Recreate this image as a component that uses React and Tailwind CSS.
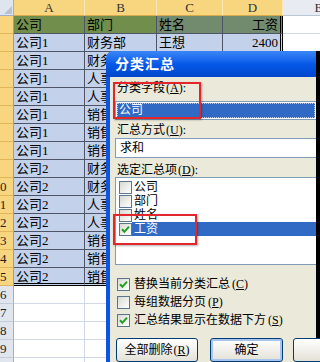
import React from "react";

const colA = ["公司", ...Array(7).fill("公司1"), ...Array(7).fill("公司2")];
const colB = [
  "部门", "财务部", "财务部", "人事部", "人事部", "销售部", "销售部", "销售部",
  "财务部", "财务部", "人事部", "人事部", "销售部", "销售部", "销售部",
];
const LETTERS = ["A", "B", "C", "D", "E"];
const ROWS = Array.from({ length: 20 }, (_, i) => i + 1);

const cellValue = (r, c) => {
  if (r > 15) return "";
  if (c === 0) return colA[r - 1];
  if (c === 1) return colB[r - 1];
  if (r === 1) return c === 2 ? "姓名" : c === 3 ? "工资" : "";
  if (r === 2) return c === 2 ? "王想" : c === 3 ? "2400" : "";
  return "";
};

const cellClass = (r, c) => {
  if (r > 15 || c === 4) return "bg-white border-r border-b border-[#d0d7e5]";
  let cls = r === 1 ? (c <= 1 ? "bg-[#718e4c] " : "bg-[#728a6e] ") : "bg-[#c3d2ea] ";
  if (c === 3 && r === 15)
    cls += "border-double border-r-[3px] border-b-[3px] border-black";
  else if (c === 3)
    cls += "border-double border-r-[3px] border-r-black border-b border-b-[#4d5566]";
  else if (r === 15)
    cls += "border-double border-b-[3px] border-b-black border-r border-r-[#4d5566]";
  else cls += "border-r border-b border-[#4d5566]";
  return cls;
};

function Box({ checked }) {
  return (
    <span className="w-[13px] h-[13px] shrink-0 border border-[#5a7590] bg-linear-to-br from-[#d9d9d2] to-white flex items-center justify-center">
      {checked && (
        <svg width="9" height="9" viewBox="0 0 9 9">
          <path d="M1 4.2 L3.4 6.8 L8 1.6" stroke="#21a121" strokeWidth="2" fill="none" />
        </svg>
      )}
    </span>
  );
}

const Sheet = () => (
  <div className="grid w-max grid-cols-[14px_71px_72px_66px_60px_72px]">
    <div className="h-[16px] bg-[#dfe5ee] border-r border-b border-[#9eb0c8] relative">
      <svg className="absolute right-[1px] bottom-[1px]" width="8" height="8" viewBox="0 0 8 8">
        <path d="M8 0 L8 8 L0 8 Z" fill="#b7c3d3" />
      </svg>
    </div>
    {LETTERS.map((l, i) => (
      <div
        key={l}
        className={
          i < 4
            ? "h-[16px] bg-[#f8d680] border-r border-r-[#fbe8b4] border-b border-b-[#d8aa4c] text-center text-[13px] leading-[15px] text-[#333]"
            : "h-[16px] bg-[#e8ecf2] border-r border-b border-[#b9c6d6] text-center text-[13px] leading-[15px] text-[#333]"
        }
      >
        {l}
      </div>
    ))}
    {ROWS.map((r) => (
      <React.Fragment key={r}>
        <div
          className={
            r <= 15
              ? "h-[18px] overflow-hidden bg-[#f8d680] border-b border-b-[#e0b65a] border-r border-r-[#c99a3c]"
              : "h-[18px] overflow-hidden bg-[#e1e6ee] border-b border-b-[#c3ccd9] border-r border-r-[#9eb0c8]"
          }
        >
          {/* header column is cut at the left edge: only the last digit shows */}
          <div className="w-[30px] -ml-[15px] text-center text-[13px] leading-[17px] text-[#222]">
            {r >= 10 ? r : ""}
          </div>
        </div>
        {LETTERS.map((l, c) => (
          <div
            key={l}
            className={`h-[18px] overflow-hidden whitespace-nowrap px-[2px] text-[13px] leading-[17px] text-black ${cellClass(r, c)} ${c === 3 ? "text-right" : ""}`}
          >
            {cellValue(r, c)}
          </div>
        ))}
      </React.Fragment>
    ))}
  </div>
);

const Dialog = () => (
  <div className="absolute left-[106px] top-[51px] bottom-0 w-[214px] flex flex-col border-r-[4px] border-black">
    <div className="h-[26px] shrink-0 rounded-tl-[7px] bg-linear-to-b from-[#3a86f8] via-[#0559e8] to-[#0347cc] pl-[9px] flex items-center text-white font-bold text-[14px] tracking-[1px]">
      分类汇总
    </div>
    <div className="flex-1 relative border-l-[4px] border-[#0b55df] bg-[#ebe9d9] pl-[5px] text-[12px] text-black">
      <div className="mt-[4px] h-[14px] leading-[14px] pl-[2px]">
        分类字段<span className="ml-[1px]">(<u>A</u>):</span>
      </div>
      <div className="mt-[6px] h-[19px] bg-white border border-r-0 border-[#7f9db9] p-[1px]">
        <div className="h-full bg-[#316ac5] text-white pl-[2px] leading-[15px] outline-1 outline-dotted outline-[#b8c8e8] -outline-offset-1">
          公司
        </div>
      </div>
      <div className="mt-[3px] h-[14px] leading-[14px] pl-[2px]">
        汇总方式<span className="ml-[1px]">(<u>U</u>):</span>
      </div>
      <div className="mt-[1px] h-[20px] bg-white border border-r-0 border-[#7f9db9] pl-[4px] leading-[18px]">求和</div>
      <div className="mt-[5px] h-[14px] leading-[14px] pl-[2px]">
        选定汇总项<span className="ml-[1px]">(<u>D</u>):</span>
      </div>
      <div className="h-[88px] bg-white border border-r-0 border-[#7f9db9] pt-[2px] pl-[3px]">
        {[
          ["公司", false],
          ["部门", false],
          ["姓名", false],
          ["工资", true],
        ].map(([t, on]) => (
          <div key={t} className="h-[14px] flex items-center">
            <Box checked={on} />
            <div className={on ? "flex-1 h-[14px] bg-[#316ac5] text-white pl-[2px] leading-[14px]" : "flex-1 pl-[2px] leading-[14px]"}>
              {t}
            </div>
          </div>
        ))}
      </div>
      <div className="mt-[12px] flex flex-col gap-[4px] pl-[2px]">
        {[
          ["替换当前分类汇总", "C", true],
          ["每组数据分页", "P", false],
          ["汇总结果显示在数据下方", "S", true],
        ].map(([t, k, on]) => (
          <div key={t} className="h-[14px] flex items-center gap-[4px] whitespace-nowrap">
            <Box checked={on} />
            <span className="leading-[14px]">
              {t}
              <span className="ml-[2px]">(<u>{k}</u>)</span>
            </span>
          </div>
        ))}
      </div>
      <div className="mt-[11px] flex gap-[12px] pl-[1px]">
        <div className="h-[24px] w-[82px] shrink-0 rounded-[3px] border border-[#003c74] bg-linear-to-b from-white to-[#e3e1d6] flex items-center justify-center">
          全部删除<span className="ml-[1px]">(<u>R</u>)</span>
        </div>
        <div className="h-[24px] w-[73px] shrink-0 rounded-[3px] border border-[#003c74] bg-linear-to-b from-white to-[#e3e1d6] shadow-[inset_0_0_0_2px_#a9c4ee] flex items-center justify-center">
          确定
        </div>
        <div className="-ml-[2px] h-[24px] w-[80px] shrink-0 rounded-[3px] border border-[#003c74] bg-linear-to-b from-white to-[#e3e1d6]"></div>
      </div>
      <div className="absolute left-[3px] top-[5px] w-[88px] h-[37px] border-2 border-[#e3262b] shadow-[1px_1px_2px_rgba(0,0,0,0.3)]"></div>
      <div className="absolute left-[3px] top-[137px] w-[84px] h-[31px] border-2 border-[#e3262b] shadow-[1px_1px_2px_rgba(0,0,0,0.3)]"></div>
    </div>
  </div>
);

export default function App() {
  return (
    <div className="relative w-[320px] h-[362px] overflow-hidden bg-white font-[family-name:'Liberation_Serif','Noto_Sans_CJK_SC',serif]">
      <Sheet />
      <Dialog />
    </div>
  );
}
